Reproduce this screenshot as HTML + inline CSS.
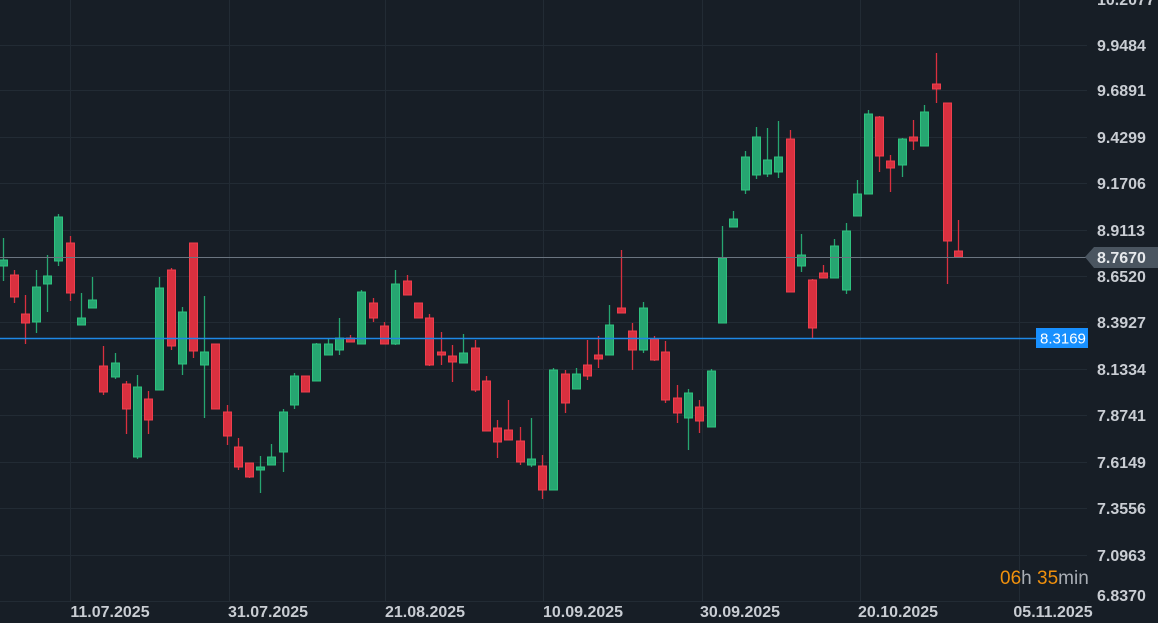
<!DOCTYPE html>
<html><head><meta charset="utf-8"><style>
html,body{margin:0;padding:0;background:#171e26;width:1158px;height:623px;overflow:hidden}
svg{display:block}
text{font-family:"Liberation Sans",sans-serif}
</style></head><body>
<svg id="s" width="1158" height="623" viewBox="0 0 1158 623" xmlns="http://www.w3.org/2000/svg">
<rect width="1158" height="623" fill="#171e26"/>
<g id="grid" stroke="#222b34" stroke-width="1"></g>
<g id="c"></g>
<line x1="0" y1="257.5" x2="1086" y2="257.5" stroke="#6b7580" stroke-width="1"/>
<line x1="0" y1="338.5" x2="1036" y2="338.5" stroke="#1e88e5" stroke-width="1.5"/>
<g id="lab" font-size="16" fill="#c9cdd3" font-weight="bold"></g>
<polygon points="1085,257 1094,247 1158,247 1158,268 1094,268" fill="#4a5560"/>
<text x="1097" y="263" font-size="16" font-weight="bold" fill="#e6e9ec">8.7670</text>
<rect x="1036" y="328" width="52" height="20" fill="#1890ff"/>
<text x="1040" y="343.5" font-size="15" fill="#fff">8.3169</text>
<text x="1000" y="584" font-size="19"><tspan fill="#f0900c">06</tspan><tspan fill="#a9aeb5">h </tspan><tspan fill="#f0900c">35</tspan><tspan fill="#a9aeb5">min</tspan></text>
<g font-size="16" font-weight="bold" fill="#c9cdd3" text-anchor="middle">
<text x="110" y="617">11.07.2025</text><text x="268" y="617">31.07.2025</text><text x="425" y="617">21.08.2025</text><text x="583" y="617">10.09.2025</text><text x="740" y="617">30.09.2025</text><text x="898" y="617">20.10.2025</text><text x="1053" y="617">05.11.2025</text>
</g>
</svg>
<script>
var ns="http://www.w3.org/2000/svg",g=document.getElementById('grid'),c=document.getElementById('c'),l=document.getElementById('lab');
function el(p,t,a){var e=document.createElementNS(ns,t);for(var k in a)e.setAttribute(k,a[k]);p.appendChild(e);return e;}
var labs=[[-1,"10.2077"],[45,"9.9484"],[90,"9.6891"],[137,"9.4299"],[183,"9.1706"],[230,"8.9113"],[276,"8.6520"],[322,"8.3927"],[369,"8.1334"],[415,"7.8741"],[462,"7.6149"],[508,"7.3556"],[555,"7.0963"],[595,"6.8370"]];
labs.forEach(function(a){if(a[0]>0&&a[0]<590)el(g,'line',{x1:0,x2:1087,y1:a[0]+.5,y2:a[0]+.5});var t=el(l,'text',{x:1097,y:a[0]+6});t.textContent=a[1];});
el(g,'line',{x1:0,x2:1087,y1:601.5,y2:601.5});
[70,229,385,543,702,860,1019].forEach(function(x){el(g,'line',{x1:x+.5,x2:x+.5,y1:0,y2:601});});
var d=[
[3,'G',238,260,266,281],[14,'R',270,275,297,303],[25,'R',295,314,323,344],[36,'G',270,287,322,333],[47,'G',255,276,284,312],[58,'G',214,217,261,266],[70,'R',236,243,293,301],[81,'G',293,318,325,325],[92,'G',277,300,308,308],
[103,'R',346,366,392,395],[115,'G',353,363,377,379],[126,'R',381,384,409,434],[137,'G',375,387,457,459],[148,'R',391,399,420,434],[159,'G',277,288,390,390],[171,'R',268,270,346,350],[182,'G',307,312,364,375],[193,'R',243,243,351,358],[204,'G',296,352,365,418],[215,'R',344,344,409,409],[227,'R',405,412,436,445],[238,'R',438,447,467,470],[249,'R',463,463,477,478],[260,'G',456,467,470,493],[271,'G',444,457,465,465],[283,'G',409,412,452,472],[294,'G',373,376,405,409],[305,'R',376,376,392,392],[316,'G',343,344,381,381],[328,'G',339,344,355,355],[339,'G',318,338,350,355],[350,'R',335,338,342,342],[361,'G',290,292,344,344],[373,'R',298,303,318,322],[384,'R',322,326,344,344],[395,'G',270,284,344,345],[407,'R',275,281,295,295],[418,'R',303,303,318,318],[429,'R',314,318,365,366],[441,'R',332,352,355,365],[452,'R',345,356,362,382],[463,'G',334,353,363,363],[475,'R',340,348,390,392],[486,'R',376,381,431,431],[497,'R',420,428,442,458],[508,'R',400,430,440,440],[520,'R',427,441,462,465],[531,'G',418,459,465,467],[542,'R',455,466,490,499],[553,'G',368,370,490,490],[565,'R',370,374,403,413],[576,'G',368,374,389,389],[587,'R',340,365,376,380],[598,'R',336,355,359,368],[609,'G',305,325,355,355],[621,'R',250,308,313,313],[632,'R',323,331,350,370],[643,'G',302,308,350,353],[654,'R',336,339,360,361],[665,'R',341,352,400,403],[677,'R',385,398,413,423],[688,'G',389,393,418,450],[699,'R',400,407,421,433],[711,'G',369,371,427,427],[722,'G',226,258,323,323],[733,'G',211,219,227,227],[745,'G',151,157,190,194],[756,'G',127,137,175,179],[767,'G',128,160,174,177],[778,'G',121,157,172,178],[790,'R',130,139,292,292],[801,'G',234,255,266,272],[812,'R',279,280,328,338],[823,'R',265,273,278,278],[834,'G',239,246,278,278],[846,'G',223,231,290,294],[857,'G',180,194,216,216],[868,'G',110,114,194,194],[879,'R',116,117,156,172],[890,'R',155,161,168,192],[902,'G',138,139,165,177],[913,'R',120,137,141,150],[924,'G',105,112,146,146],[936,'R',53,84,89,103],[947,'R',103,103,241,284],[958,'R',220,251,257,258]];
d.forEach(function(a){var col=a[1]=='G'?'#26a671':'#d9303f',br=a[1]=='G'?'#2fc27f':'#ef3f4d';
el(c,'line',{x1:a[0]+.5,x2:a[0]+.5,y1:a[2],y2:a[5],stroke:col,'stroke-width':1.3});
var h=Math.max(a[4]-a[3],3);el(c,'rect',{x:a[0]-3.5,y:a[3],width:8,height:h,fill:col,stroke:br,'stroke-width':1});});
</script>
</body></html>
